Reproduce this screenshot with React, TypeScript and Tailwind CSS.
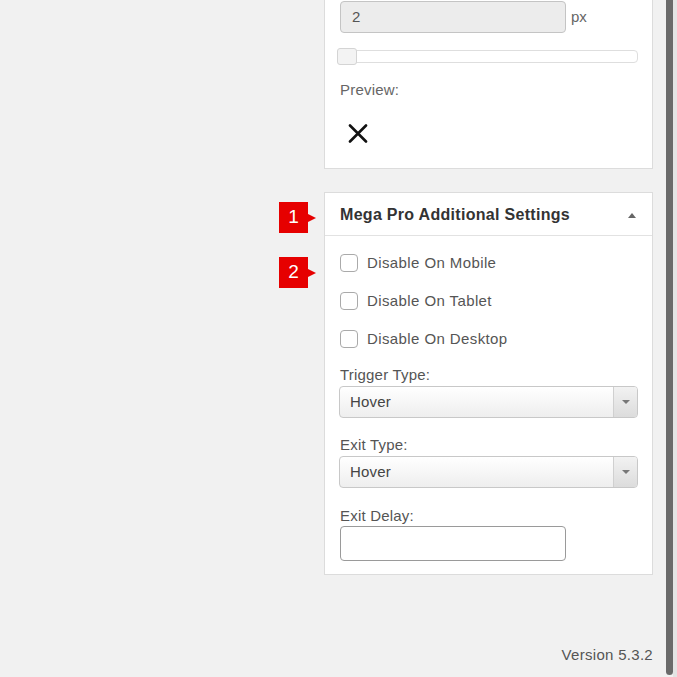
import React from 'react';

const font = { fontFamily: '"Liberation Sans", Arial, sans-serif' };

const Badge: React.FC<{ n: string; top: string }> = ({ n, top }) => (
  <div className={`absolute left-[279px] ${top} flex items-center`}>
    <div className="w-[29px] h-[31px] bg-[#e60000] text-white text-[19px] flex items-center justify-center">{n}</div>
    <div className="w-0 h-0 border-y-[4px] border-y-transparent border-l-[8px] border-l-[#e60000]" />
  </div>
);

const Select: React.FC<{ value: string }> = ({ value }) => (
  <div className="flex h-[32px] w-[299px] ml-[-1px] rounded-[4px] border border-[#c8c8c8] bg-gradient-to-b from-white to-[#eeeeee] overflow-hidden">
    <div className="flex-1 flex items-center pl-[10px] text-[15px] text-[#444] tracking-[0.2px]">{value}</div>
    <div className="w-[24px] border-l border-[#d0d0d0] bg-gradient-to-b from-[#f2f2f2] to-[#dcdcdc] flex items-center justify-center">
      <div className="w-0 h-0 border-x-[4px] border-x-transparent border-t-[4px] border-t-[#777]" />
    </div>
  </div>
);

const checks = ['Disable On Mobile', 'Disable On Tablet', 'Disable On Desktop'];

const App: React.FC = () => {
  return (
    <div className="relative w-[677px] h-[677px] bg-[#f1f1f1] flex overflow-hidden" style={font}>
      <div className="flex-1 flex flex-col items-end pr-[13px]">
        {/* border settings panel, cut off at the top */}
        <div className="w-[329px] bg-white border border-t-0 border-[#dcdcdc] pl-[15px] pr-[15px] pb-[25px]">
          <div className="flex items-center mt-px">
            <div className="w-[226px] h-[32px] rounded-[4px] border border-[#c4c4c4] bg-[#ececec] flex items-center pl-[11px] text-[15px] text-[#555]">2</div>
            <span className="ml-[5px] text-[15px] text-[#666]">px</span>
          </div>
          <div className="relative mt-[15px] ml-[-3px] w-[301px] h-[17px]">
            <div className="absolute left-0 right-0 top-[2px] h-[13px] rounded-[4px] border border-[#dedede] bg-white" />
            <div className="absolute left-0 top-0 w-[20px] h-[17px] rounded-[3px] border border-[#d4d4d4] bg-[#f3f3f3]" />
          </div>
          <div className="mt-[16px] h-[18px] leading-[18px] text-[15px] text-[#666] tracking-[0.2px]">Preview:</div>
          <svg className="mt-[25px] ml-[8px]" width="20" height="19" viewBox="0 0 20 19">
            <path d="M2 1.5 L18 17.5 M18 1.5 L2 17.5" stroke="#111" strokeWidth="2.6" strokeLinecap="round" />
          </svg>
        </div>

        {/* mega pro panel */}
        <div className="mt-[23px] w-[329px] bg-white border border-[#dcdcdc]">
          <div className="h-[43px] border-b border-[#e2e2e2] flex items-center justify-between pl-[15px] pr-[16px] pt-[2px]">
            <span className="text-[16px] font-bold text-[#333] tracking-[0.3px]">Mega Pro Additional Settings</span>
            <div className="w-0 h-0 border-x-[4px] border-x-transparent border-b-[5px] border-b-[#666]" />
          </div>
          <div className="pl-[15px] pr-[15px] pt-[8px] pb-[13px]">
            {checks.map((c) => (
              <div key={c} className="h-[38px] flex items-center">
                <div className="w-[18px] h-[18px] rounded-[4px] border border-[#aaa] bg-white" />
                <span className="ml-[9px] text-[15px] text-[#555] tracking-[0.4px]">{c}</span>
              </div>
            ))}
            <div className="mt-[7px] h-[20px] leading-[20px] text-[15px] text-[#555] tracking-[0.2px]">Trigger Type:</div>
            <div className="mt-[1px]"><Select value="Hover" /></div>
            <div className="mt-[17px] h-[20px] leading-[20px] text-[15px] text-[#555] tracking-[0.2px]">Exit Type:</div>
            <div className="mt-[1px]"><Select value="Hover" /></div>
            <div className="mt-[18px] h-[20px] leading-[20px] text-[15px] text-[#555] tracking-[0.2px]">Exit Delay:</div>
            <div className="w-[226px] h-[35px] rounded-[4px] border border-[#9a9a9a] bg-white" />
          </div>
        </div>

        <div className="mt-[70px] h-[20px] leading-[20px] text-[15px] text-[#555] tracking-[0.3px]">Version 5.3.2</div>
      </div>

      {/* scrollbar */}
      <div className="w-[11px] h-full flex">
        <div className="w-[7px] h-[675px] bg-[#6a6a6a] rounded-b-[4px]" />
        <div className="flex-1 bg-[#e4e4e4]" />
      </div>

      <Badge n="1" top="top-[202px]" />
      <Badge n="2" top="top-[257px]" />
    </div>
  );
};

export default App;
